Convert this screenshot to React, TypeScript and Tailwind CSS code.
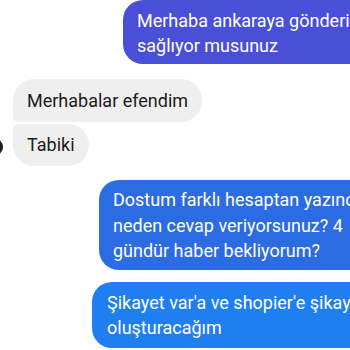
const font = { fontFamily: 'Roboto, "Noto Sans", sans-serif' };

const App = () => {
  return (
    <div className="w-[350px] h-[350px] overflow-hidden bg-white relative" style={font}>
      <div className="flex flex-col">
        <div className="flex justify-start pl-[123px]">
          <div className="shrink-0 w-[280px] h-[64px] bg-[#4a4fd8] text-white rounded-[20px] pl-[14px] pt-[8px] text-[18px] leading-[25px] whitespace-nowrap">
            Merhaba ankaraya gönderim
            <br />
            sağlıyor musunuz
          </div>
        </div>

        <div className="flex items-end mt-[15px]">
          <div className="shrink-0 w-[18px] h-[18px] rounded-full bg-[#222] -ml-[15px] mb-[10px] mr-[10px] invisible" />
          <div className="h-[43px] bg-[#efefef] text-[#1b1b1b] rounded-[21px] rounded-bl-[5px] px-[14px] pt-[9px] text-[18px] leading-[25px] whitespace-nowrap">
            Merhabalar efendim
          </div>
        </div>

        <div className="flex items-center mt-[2px]">
          <div className="shrink-0 w-[18px] h-[18px] rounded-full bg-[#1e1e1e] -ml-[15px] mr-[10px] mt-[4px]" />
          <div className="h-[42px] bg-[#efefef] text-[#1b1b1b] rounded-[21px] rounded-tl-[5px] px-[14px] pt-[8px] text-[18px] leading-[25px] whitespace-nowrap">
            Tabiki
          </div>
        </div>

        <div className="flex pl-[99px] mt-[14px]">
          <div className="shrink-0 w-[300px] h-[90px] bg-[#2c6ce3] text-white rounded-[20px] pl-[14px] pt-[7px] text-[18px] leading-[25.5px] whitespace-nowrap">
            Dostum farklı hesaptan yazınca
            <br />
            neden cevap veriyorsunuz? 4
            <br />
            gündür haber bekliyorum?
          </div>
        </div>

        <div className="flex pl-[92px] mt-[12px]">
          <div className="shrink-0 w-[320px] h-[66px] bg-[#1f7ff0] text-white rounded-[20px] pl-[15px] pt-[8px] text-[18px] leading-[25px] whitespace-nowrap">
            Şikayet var'a ve shopier'e şikayet
            <br />
            oluşturacağım
          </div>
        </div>
      </div>
    </div>
  );
};

export default App;
